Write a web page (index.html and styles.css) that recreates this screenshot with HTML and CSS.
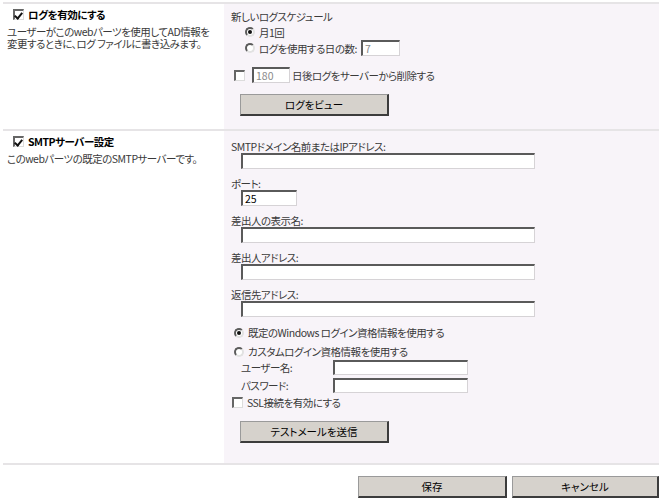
FILE: index.html
```html
<!DOCTYPE html>
<html lang="ja">
<head>
    <meta charset="UTF-8">
    <title>ログとSMTPの設定</title>
    <link rel="stylesheet" href="styles.css">
</head>
<body>

    <div class="page">

        <!-- Log settings -->
        <section class="row">
            <div class="info">
                <div class="title"><span class="check on"></span>ログを有効にする</div>
                <p class="desc">ユーザーがこのwebパーツを使用してAD情報を<br>変更するときに、ログ ファイルに書き込みます。</p>
            </div>
            <div class="panel panel-log">
                <div class="label">新しいログスケジュール</div>
                <div class="opt indent"><span class="radio on"></span>月1回</div>
                <div class="opt indent"><span class="radio"></span>ログを使用する日の数:<input class="field days muted" type="text" value="7"></div>
                <div class="opt purge"><span class="check"></span><input class="field short muted" type="text" value="180">日後ログをサーバーから削除する</div>
                <button class="btn btn-panel">ログをビュー</button>
            </div>
        </section>

        <!-- SMTP settings -->
        <section class="row">
            <div class="info">
                <div class="title"><span class="check on"></span>SMTPサーバー設定</div>
                <p class="desc">このwebパーツの既定のSMTPサーバーです。</p>
            </div>
            <div class="panel panel-smtp">
                <div class="block">
                    <div class="label">SMTPドメイン名前またはIPアドレス:</div>
                    <input class="field wide" type="text" value="">
                </div>
                <div class="block">
                    <div class="label">ポート:</div>
                    <input class="field port" type="text" value="25">
                </div>
                <div class="block">
                    <div class="label">差出人の表示名:</div>
                    <input class="field wide" type="text" value="">
                </div>
                <div class="block">
                    <div class="label">差出人アドレス:</div>
                    <input class="field wide" type="text" value="">
                </div>
                <div class="block">
                    <div class="label">返信先アドレス:</div>
                    <input class="field wide" type="text" value="">
                </div>

                <div class="opt cred"><span class="radio on"></span>既定のWindows ログイン資格情報を使用する</div>
                <div class="opt cred cred-custom"><span class="radio"></span>カスタムログイン資格情報を使用する</div>
                <div class="login">
                    <span class="login-label">ユーザー名:</span>
                    <input class="field account" type="text" value="">
                </div>
                <div class="login">
                    <span class="login-label">パスワード:</span>
                    <input class="field account" type="password" value="">
                </div>
                <div class="opt ssl"><span class="check"></span>SSL接続を有効にする</div>
                <button class="btn btn-panel">テストメールを送信</button>
            </div>
        </section>

        <div class="footer">
            <button class="btn btn-save">保存</button>
            <button class="btn btn-cancel">キャンセル</button>
        </div>

    </div>

</body>
</html>
```

FILE: styles.css
```css
* {
    box-sizing: border-box;
}

body {
    margin: 0;
    background: #fff;
    font-family: "Noto Sans CJK JP", "Noto Sans", sans-serif;
    font-size: 10.5px;
    letter-spacing: -0.5px;
    font-feature-settings: "palt";
    color: #3a3a3a;
}

.page {
    padding: 2px 1px 0 3px;
}

/*--------------------
Sections
--------------------*/
.row {
    display: grid;
    grid-template-columns: 221px 1fr;
    border-top: 2px solid #e6e4e6;
}

.info {
    padding: 3px 0 0 4px;
}

.title {
    display: flex;
    align-items: center;
    height: 14px;
    margin-left: 6px;
    font-weight: bold;
    color: #000;
}

.title .check {
    margin-right: 4px;
}

.desc {
    margin: 5px 0 0;
    line-height: 12px;
    white-space: nowrap;
}

.panel {
    background: #f8f4f9;
    padding-left: 7px;
}

.panel-log {
    padding-top: 6px;
    padding-bottom: 13px;
}

.panel-smtp {
    padding-top: 9px;
    padding-bottom: 20px;
}

.label {
    line-height: 13px;
    white-space: nowrap;
}

.panel-log .label {
    line-height: 14px;
}

/*--------------------
Options
--------------------*/
.opt {
    display: flex;
    align-items: center;
    height: 16px;
    white-space: nowrap;
}

.opt.indent {
    padding-left: 14px;
}

.opt .radio,
.opt .check {
    margin-right: 4px;
}

.opt.purge {
    margin-top: 11px;
    margin-left: 3px;
}

.opt.purge .check {
    margin-right: 7px;
}

.opt.cred {
    height: 15px;
    margin-left: 3px;
}

.cred-custom {
    margin-top: 4px;
}

.opt.ssl {
    height: 17px;
    margin-left: 1px;
}

.check {
    display: inline-block;
    position: relative;
    flex: none;
    width: 11px;
    height: 11px;
    background: #fff;
    border-top: 2px solid #666;
    border-left: 2px solid #666;
    border-right: 1px solid #dcdcdc;
    border-bottom: 1px solid #dcdcdc;
}

.check.on::after {
    content: "";
    position: absolute;
    left: 1px;
    top: 0;
    width: 3px;
    height: 6px;
    border-right: 2px solid #111;
    border-bottom: 2px solid #111;
    transform: rotate(40deg);
}

.radio {
    display: inline-block;
    position: relative;
    flex: none;
    width: 10px;
    height: 10px;
    border-radius: 50%;
    background: #fff;
    border: 2px solid;
    border-color: #5c5c5c #e2e2e2 #e2e2e2 #5c5c5c;
}

.radio.on::after {
    content: "";
    position: absolute;
    left: 1px;
    top: 1px;
    width: 4px;
    height: 4px;
    border-radius: 50%;
    background: #111;
}

/*--------------------
Fields
--------------------*/
.field {
    height: 16px;
    margin: 0;
    padding: 0 2px;
    background: #fff;
    font: inherit;
    letter-spacing: 0;
    color: #000;
    border-top: 2px solid #5a5a5a;
    border-left: 2px solid #5a5a5a;
    border-right: 1px solid #d6d3d6;
    border-bottom: 1px solid #d6d3d6;
    outline: none;
}

.field.muted {
    color: #8a8a8a;
}

.days {
    width: 39px;
    margin-left: 4px;
}

.short {
    width: 38px;
    margin-right: 2px;
}

.block {
    margin-bottom: 8px;
}

.block .field {
    display: block;
    margin-left: 10px;
}

.wide {
    width: 294px;
}

.port {
    width: 56px;
}

.login {
    display: flex;
    align-items: center;
    height: 17px;
    margin-left: 10px;
}

.login:first-of-type {
    margin-top: 2px;
}

.login + .login {
    margin-top: 1px;
}

.login-label {
    width: 92px;
}

.account {
    width: 135px;
    height: 15px;
}

/*--------------------
Buttons
--------------------*/
.btn {
    display: block;
    height: 22px;
    padding: 0;
    background: #d6d2cc;
    font: inherit;
    color: #000;
    border-top: 1px solid #9a9a9a;
    border-left: 1px solid #9a9a9a;
    border-right: 2px solid #3c3c3c;
    border-bottom: 2px solid #3c3c3c;
    cursor: pointer;
}

.btn-panel {
    width: 149px;
    margin: 11px 0 0 9px;
}

.panel-smtp .btn-panel {
    margin-top: 10px;
}

.footer {
    display: flex;
    justify-content: flex-end;
    gap: 5px;
    border-top: 2px solid #e6e4e6;
    padding-top: 11px;
}

.btn-save {
    width: 149px;
}

.btn-cancel {
    width: 147px;
}
```
